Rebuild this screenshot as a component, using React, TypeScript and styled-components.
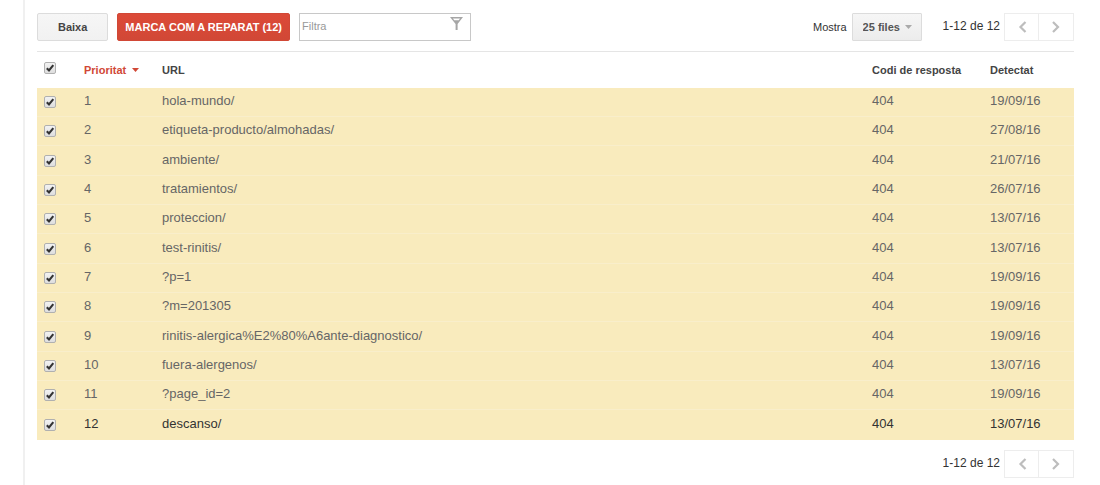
import React, { useState } from 'react';
import styled, { createGlobalStyle, css } from 'styled-components';

const GlobalStyle = createGlobalStyle`
  *, *::before, *::after { box-sizing: border-box; }
  html, body { margin: 0; background: #fff; }
  body, button, input, select {
    font-family: "Liberation Sans", Arial, sans-serif;
    color: #333;
  }
`;

const Page = styled.div`
  padding-left: 23px;
`;

const Panel = styled.main`
  min-height: 100vh;
  padding: 13px 26px 7px 12px;
  border-left: 2px solid #f0f0f0;
`;

const Toolbar = styled.div`
  display: flex;
  align-items: center;
  gap: 9px;
  padding-bottom: 10px;
  border-bottom: 1px solid #e5e5e5;
`;

const Button = styled.button<{ $primary?: boolean }>`
  height: 28px;
  padding: 0 ${(p) => (p.$primary ? 7 : 20)}px;
  border: 1px solid #dcdcdc;
  border-radius: 2px;
  background: linear-gradient(#f6f6f6, #f1f1f1);
  color: #444;
  font-size: 11px;
  font-weight: bold;
  white-space: nowrap;
  ${(p) =>
    p.$primary &&
    css`
      border-color: #d14836;
      background: linear-gradient(#dc4a38, #d14836);
      color: #fff;
      text-transform: uppercase;
    `}
`;

const FilterBox = styled.div`
  position: relative;
  width: 172px;
`;

const FilterInput = styled.input`
  display: block;
  width: 100%;
  height: 28px;
  padding: 0 26px 2px 2px;
  border: 1px solid #c8c8c8;
  font-size: 11px;
  &::placeholder { color: #999; opacity: 1; }
`;

const FunnelIcon = styled.svg`
  position: absolute;
  top: 4px;
  right: 8px;
  pointer-events: none;
`;

const PageSize = styled.div`
  display: flex;
  align-items: center;
  gap: 5px;
  margin-left: auto;
  margin-right: 12px;
  font-size: 11px;
`;

const SelectBox = styled.div`
  position: relative;
`;

const Select = styled.select`
  display: block;
  width: 70px;
  height: 28px;
  padding: 0 20px 0 10px;
  appearance: none;
  border: 1px solid #dcdcdc;
  border-radius: 1px;
  background: linear-gradient(#f6f6f6, #ececec);
  color: #555;
  font-size: 11px;
  font-weight: bold;
`;

const SelectArrow = styled.svg`
  position: absolute;
  top: 12px;
  right: 10px;
  pointer-events: none;
`;

const PagerBox = styled.nav`
  display: flex;
  align-items: center;
  justify-content: flex-end;
  gap: 4px;
  font-size: 12px;
`;

const PagerLabel = styled.span`
  padding-bottom: 2px;
`;

const PagerButtons = styled.div`
  display: flex;
`;

const PagerButton = styled.button`
  display: grid;
  place-items: center;
  width: 35px;
  height: 28px;
  padding: 0;
  border: 1px solid #ededed;
  background: #fff;
  & + & { width: 36px; margin-left: -1px; }
`;

const Table = styled.table`
  width: 100%;
  margin-bottom: 10px;
  border-spacing: 0;
  table-layout: fixed;
  text-align: left;
  font-size: 13px;
`;

const Col = styled.col<{ $width?: number }>`
  width: ${(p) => (p.$width ? `${p.$width}px` : 'auto')};
`;

const HeadCell = styled.th<{ $sorted?: boolean }>`
  height: 36px;
  padding: 0;
  color: ${(p) => (p.$sorted ? '#d14836' : '#444')};
  font-size: 11px;
  font-weight: bold;
  white-space: nowrap;
`;

const SortArrow = styled.svg`
  margin-left: 6px;
  vertical-align: 2px;
`;

const Cell = styled.td`
  padding: 0 0 2px;
  border-bottom: 1px solid #f9eecb;
  line-height: 16px;
`;

const CheckCell = styled(Cell)`
  padding: 0 0 0 7px;
`;

const Row = styled.tr<{ $selected: boolean }>`
  height: 29px;
  background: ${(p) => (p.$selected ? '#f9ebbd' : '#fff')};
  color: #666;
  &:nth-child(3n) { height: 30px; }
  &:last-child { color: #333; }
  &:last-child ${Cell} { border-bottom-color: transparent; }
`;

const CheckHead = styled(HeadCell)`
  padding: 0 0 4px 7px;
`;

const CheckBoxWrap = styled.label`
  display: grid;
  width: 12px;
  height: 12px;
  & > * { grid-area: 1 / 1; }
`;

const CheckInput = styled.input`
  width: 12px;
  height: 12px;
  margin: 0;
  appearance: none;
  border: 1px solid #b0b0b0;
  border-radius: 2px;
  background: linear-gradient(#f2f2f2, #dedede);
`;

const Tick = styled.svg`
  pointer-events: none;
`;

interface CheckProps {
  label: string;
  checked: boolean;
  onChange: () => void;
}

const Check = ({ label, checked, onChange }: CheckProps) => (
  <CheckBoxWrap>
    <CheckInput type="checkbox" aria-label={label} checked={checked} onChange={onChange} />
    {checked && (
      <Tick width="12" height="12" viewBox="0 0 12 12" fill="none" aria-hidden="true">
        <path d="M2.8 6.2 5 8.4 9.3 3.2" stroke="#333" strokeWidth="2.1" />
      </Tick>
    )}
  </CheckBoxWrap>
);

const Pager = () => (
  <PagerBox aria-label="Paginació">
    <PagerLabel>1-12 de 12</PagerLabel>
    <PagerButtons>
      <PagerButton aria-label="Anterior">
        <svg width="10" height="12" viewBox="0 0 10 12" fill="none">
          <path d="M8.500 1 3.500 6l5 5" stroke="#bdbdbd" strokeWidth="2.2" />
        </svg>
      </PagerButton>
      <PagerButton aria-label="Següent">
        <svg width="10" height="12" viewBox="0 0 10 12" fill="none">
          <path d="m2 1 5 5-5 5" stroke="#bdbdbd" strokeWidth="2.2" />
        </svg>
      </PagerButton>
    </PagerButtons>
  </PagerBox>
);

const errors = [
  { url: 'hola-mundo/', date: '19/09/16' },
  { url: 'etiqueta-producto/almohadas/', date: '27/08/16' },
  { url: 'ambiente/', date: '21/07/16' },
  { url: 'tratamientos/', date: '26/07/16' },
  { url: 'proteccion/', date: '13/07/16' },
  { url: 'test-rinitis/', date: '13/07/16' },
  { url: '?p=1', date: '19/09/16' },
  { url: '?m=201305', date: '19/09/16' },
  { url: 'rinitis-alergica%E2%80%A6ante-diagnostico/', date: '19/09/16' },
  { url: 'fuera-alergenos/', date: '13/07/16' },
  { url: '?page_id=2', date: '19/09/16' },
  { url: 'descanso/', date: '13/07/16' },
];

export default function App() {
  const [selected, setSelected] = useState(() => errors.map(() => true));
  const count = selected.filter(Boolean).length;
  const all = count === errors.length;

  return (
    <Page>
      <GlobalStyle />
      <Panel>
        <Toolbar>
          <Button>Baixa</Button>
          <Button $primary>Marca com a reparat ({count})</Button>
          <FilterBox>
            <FilterInput type="text" placeholder="Filtra" aria-label="Filtra" />
            <FunnelIcon width="13" height="13" viewBox="0 0 13 13" aria-hidden="true">
              <path
                d="M0 0h13L7.600 7V13H5.600V7zM3 1.500l1.200 1.700h4.600L10 1.500z"
                fill="#a6a6a6"
                fillRule="evenodd"
              />
            </FunnelIcon>
          </FilterBox>
          <PageSize>
            <label htmlFor="page-size">Mostra</label>
            <SelectBox>
              <Select id="page-size" defaultValue="25">
                <option value="25">25 files</option>
                <option value="50">50 files</option>
                <option value="100">100 files</option>
              </Select>
              <SelectArrow width="7" height="4" viewBox="0 0 7 4" aria-hidden="true">
                <path d="M0 0h7L3.5 4z" fill="#aaa" />
              </SelectArrow>
            </SelectBox>
          </PageSize>
          <Pager />
        </Toolbar>
        <Table>
          <colgroup>
            <Col $width={47} />
            <Col $width={78} />
            <Col />
            <Col $width={118} />
            <Col $width={84} />
          </colgroup>
          <thead>
            <tr>
              <CheckHead>
                <Check
                  label="Selecciona-ho tot"
                  checked={all}
                  onChange={() => setSelected(errors.map(() => !all))}
                />
              </CheckHead>
              <HeadCell $sorted aria-sort="ascending">
                Prioritat
                <SortArrow width="7" height="4" viewBox="0 0 7 4" aria-hidden="true">
                  <path d="M0 0h7L3.5 4z" fill="#d14836" />
                </SortArrow>
              </HeadCell>
              <HeadCell>URL</HeadCell>
              <HeadCell>Codi de resposta</HeadCell>
              <HeadCell>Detectat</HeadCell>
            </tr>
          </thead>
          <tbody>
            {errors.map((e, i) => (
              <Row key={e.url} $selected={selected[i]}>
                <CheckCell>
                  <Check
                    label={e.url}
                    checked={selected[i]}
                    onChange={() => setSelected(selected.map((s, j) => (j === i ? !s : s)))}
                  />
                </CheckCell>
                <Cell>{i + 1}</Cell>
                <Cell>{e.url}</Cell>
                <Cell>404</Cell>
                <Cell>{e.date}</Cell>
              </Row>
            ))}
          </tbody>
        </Table>
        <Pager />
      </Panel>
    </Page>
  );
}
